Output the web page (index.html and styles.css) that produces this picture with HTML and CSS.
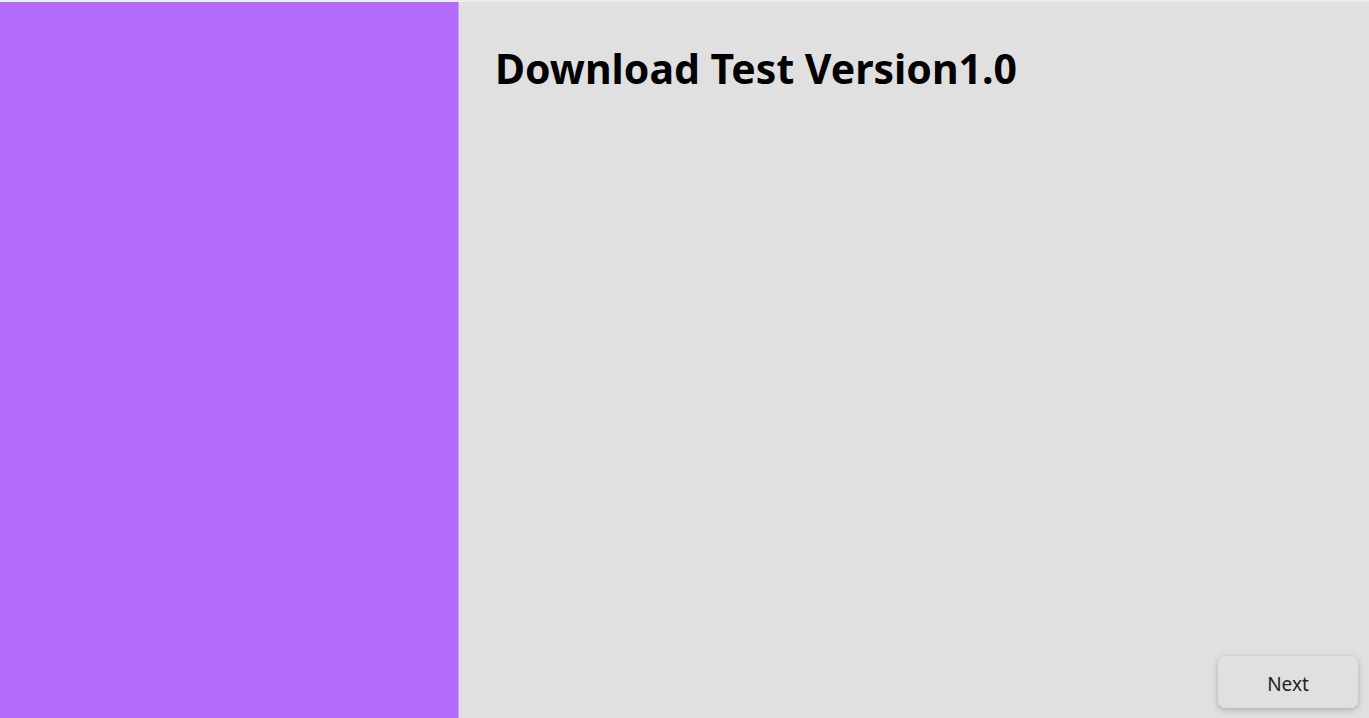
FILE: index.html
```html
<!DOCTYPE html>
<html>
<head>
<meta charset="utf-8">
<link rel="stylesheet" href="styles.css">
</head>
<body>
<div class="topbar"></div>
<div class="app">
  <aside class="sidebar"></aside>
  <main class="main">
    <h1 class="title">Download Test Version1.0</h1>
    <div class="footer">
      <button class="next">Next</button>
    </div>
  </main>
</div>
</body>
</html>
```
FILE: styles.css
```css
html, body {
  margin: 0;
  padding: 0;
  height: 100%;
  overflow: hidden;
  background: #e0e0e0;
  font-family: "Noto Sans", "Open Sans", sans-serif;
}
.topbar {
  height: 2px;
  background: #eaecef;
}
.app {
  display: flex;
  height: 716px;
}
.sidebar {
  width: 458px;
  flex: none;
  background: #b36bfb;
  border-right: 1px solid #c99cf5;
}
.main {
  flex: 1;
  display: flex;
  flex-direction: column;
  background: #e0e0e0;
  padding: 0 11px 10px 36px;
}
.title {
  margin: 38px 0 0 0;
  font-size: 41px;
  font-weight: 700;
  line-height: 56px;
  color: #000;
}
.footer {
  margin-top: auto;
  display: flex;
  justify-content: flex-end;
}
.next {
  width: 140px;
  height: 52px;
  border: none;
  border-radius: 7px;
  background: #e0e0e0;
  box-shadow: 0 2px 6px rgba(0,0,0,0.22), 0 0 2px rgba(0,0,0,0.06);
  font-family: "Noto Sans", "Open Sans", sans-serif;
  font-size: 19px;
  color: #222;
  padding: 3px 0 0 0;
}
```
